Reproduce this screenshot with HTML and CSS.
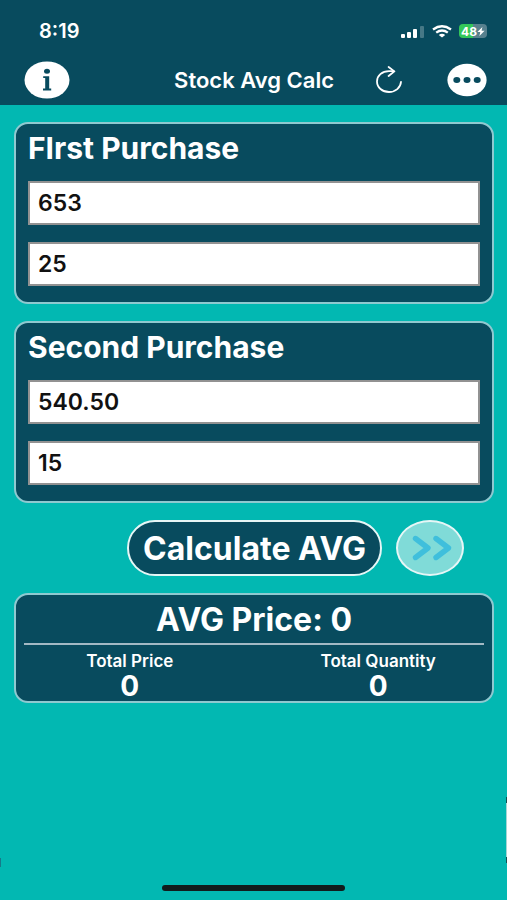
FILE: index.html
```
<!DOCTYPE html>
<html lang="en">
<head>
  <meta charset="UTF-8" />
  <meta name="viewport" content="width=device-width, initial-scale=1" />
  <title>Stock Avg Calc</title>
  <link rel="stylesheet" href="styles.css">
</head>
<body>
  <header class="header">
    <div class="status-bar">
      <span class="time">8:19</span>
      <div class="status-icons">
        <svg class="signal" width="24" height="13" viewBox="0 0 24 13" fill="#fff">
          <rect x="0" y="9" width="4" height="4" rx="1" />
          <rect x="6" y="7" width="4" height="6" rx="1" />
          <rect x="12" y="4" width="4" height="9" rx="1" />
          <rect x="19" y="1" width="4" height="12" rx="1" opacity="0.25" />
        </svg>
        <svg class="wifi" width="20" height="13" viewBox="0 0 20 13" fill="none" stroke="#fff" stroke-width="2.4">
          <path d="M1 4.4Q10 -1.8 19 4.4" />
          <path d="M4.2 7.6Q10 3.4 15.8 7.6" />
          <path d="M10 12.4L6.8 9.9Q10 7.7 13.2 9.9Z" fill="#fff" stroke="none" />
        </svg>
        <div class="battery">
          <span>48</span>
          <svg width="8" height="9" viewBox="0 0 8 9" fill="#fff"><path d="M5.4 0L0.4 5H3.3L2.4 9L7.6 3.8H4.6Z" /></svg>
        </div>
      </div>
    </div>
    <nav class="nav-bar">
      <button class="icon-button" aria-label="Info">
        <svg width="46" height="38" viewBox="0 0 46 38">
          <ellipse cx="23" cy="19" rx="22.5" ry="18.6" fill="#fff" />
          <ellipse cx="23" cy="10.2" rx="3" ry="2.5" fill="#084b5e" />
          <path d="M19.2 15.2H25.2V27.6H27.2V29.4H19V27.6H21.2V17H19.2Z" fill="#084b5e" />
        </svg>
      </button>
      <h1 class="title">Stock Avg Calc</h1>
      <button class="icon-button refresh" aria-label="Refresh">
        <svg width="28" height="28" viewBox="0 0 28 28" fill="none" stroke="#fff" stroke-width="1.8" stroke-linecap="round" stroke-linejoin="round">
          <path d="M26 15.8C25.7 21.6 20.5 26 14 26C7.3 26 2 21.4 2 15.5C2 9.7 7 5.2 14 5.2H18.6" />
          <path d="M13.6 1L19.4 5.4L13.6 10" />
        </svg>
      </button>
      <button class="icon-button" aria-label="More">
        <svg width="40" height="34" viewBox="0 0 40 34">
          <ellipse cx="20" cy="17" rx="19.6" ry="16.3" fill="#fff" />
          <g fill="#084b5e">
            <ellipse cx="9.8" cy="17" rx="3.5" ry="2.9" />
            <ellipse cx="20" cy="17" rx="3.5" ry="2.9" />
            <ellipse cx="30.2" cy="17" rx="3.5" ry="2.9" />
          </g>
        </svg>
      </button>
    </nav>
  </header>

  <main class="content">
    <section class="panel">
      <h2>FIrst Purchase</h2>
      <input type="text" id="price1" inputmode="decimal" aria-label="First purchase price" value="653">
      <input type="text" id="qty1" inputmode="decimal" aria-label="First purchase quantity" value="25">
    </section>

    <section class="panel">
      <h2>Second Purchase</h2>
      <input type="text" id="price2" inputmode="decimal" aria-label="Second purchase price" value="540.50">
      <input type="text" id="qty2" inputmode="decimal" aria-label="Second purchase quantity" value="15">
    </section>

    <div class="actions">
      <button class="calculate">Calculate AVG</button>
      <button class="next" aria-label="Next">
        <svg width="40" height="26" viewBox="0 0 40 26" fill="none" stroke="#3fbfdc" stroke-width="5.4" stroke-linecap="round" stroke-linejoin="round">
          <path d="M3.5 3.5L16 13L3.5 22.5" />
          <path d="M24 3.5L36.5 13L24 22.5" />
        </svg>
      </button>
    </div>

    <section class="panel results">
      <p class="average">AVG Price: <span id="avg">0</span></p>
      <div class="totals">
        <div class="total">
          <span class="label">Total Price</span>
          <span class="value" id="totalPrice">0</span>
        </div>
        <div class="total">
          <span class="label">Total Quantity</span>
          <span class="value" id="totalQty">0</span>
        </div>
      </div>
    </section>
  </main>

  <div class="edge-handle"></div>
  <div class="edge-mark"></div>
  <div class="home-indicator"></div>
</body>
</html>
```
FILE: styles.css
```
* {
  box-sizing: border-box;
}
body {
  font-family: Inter, "Liberation Sans", sans-serif;
  background: #02b8b2;
  color: #fff;
  display: flex;
  flex-direction: column;
  min-height: 100vh;
  margin: 0;
}
h1, h2, p {
  margin: 0;
}
button {
  font-family: inherit;
  color: inherit;
  cursor: pointer;
}
.header {
  background: #084b5e;
  padding: 20px 20px 6px 24px;
}
.status-bar {
  display: flex;
  justify-content: space-between;
  align-items: center;
  height: 22px;
  padding-left: 15px;
}
.time {
  font-size: 20px;
  font-weight: 600;
}
.status-icons {
  display: flex;
  align-items: center;
  gap: 7px;
}
.battery {
  display: flex;
  align-items: center;
  justify-content: center;
  width: 28px;
  height: 14px;
  border-radius: 4px;
  background: linear-gradient(to right, #34c759 50%, #57808e 50%);
  font-size: 12px;
  font-weight: 700;
}
.nav-bar {
  display: flex;
  align-items: center;
  height: 38px;
  margin-top: 19px;
}
.icon-button {
  display: flex;
  padding: 0;
  border: none;
  background: none;
}
.title {
  flex: 1;
  font-size: 22px;
  font-weight: 600;
  line-height: 26px;
  text-align: right;
}
.refresh {
  margin: 0 44px 0 41px;
}
.content {
  display: flex;
  flex-direction: column;
  gap: 17px;
  padding: 17px 13px 0 14px;
}
.panel {
  display: flex;
  flex-direction: column;
  gap: 17px;
  padding: 8px 12px 16px;
  border: 2px solid #8fc9d0;
  border-radius: 14px;
  background: #084b5e;
}
.panel h2 {
  font-size: 30px;
  font-weight: 700;
  line-height: 32px;
}
.panel input {
  width: 100%;
  height: 44px;
  padding: 0 8px;
  border: 2px solid #929292;
  border-radius: 0;
  background: #fff;
  color: #111;
  font-family: inherit;
  font-size: 23px;
  font-weight: 600;
}
.actions {
  display: flex;
  justify-content: flex-end;
  gap: 14px;
  padding-right: 30px;
}
.calculate {
  height: 56px;
  padding: 0 14px;
  border: 2px solid #e6f6f6;
  border-radius: 28px;
  background: #084b5e;
  font-size: 32px;
  font-weight: 700;
}
.next {
  display: flex;
  align-items: center;
  justify-content: center;
  width: 68px;
  height: 56px;
  padding: 0 0 0 4px;
  border: 2px solid #e6f6f6;
  border-radius: 50%;
  background: #80dbd8;
}
.results {
  gap: 0;
  padding: 8px 8px 0;
}
.average {
  padding-bottom: 6px;
  border-bottom: 2px solid #a3b9c4;
  font-size: 32px;
  font-weight: 700;
  line-height: 34px;
  text-align: center;
}
.totals {
  display: flex;
  justify-content: space-between;
  padding: 6px 0 0;
}
.total {
  display: flex;
  flex-direction: column;
  align-items: center;
  width: 46%;
}
.label {
  font-size: 17px;
  font-weight: 600;
  line-height: 21px;
}
.value {
  font-size: 28px;
  font-weight: 700;
  line-height: 29px;
}
/* sliver of the side drawer, tucked against the screen edge */
.edge-handle {
  position: absolute;
  right: 0;
  top: 797px;
  width: 1px;
  height: 66px;
  border: solid #114f50;
  border-width: 6px 0;
  background: #a5d5d4;
}
.edge-mark {
  position: absolute;
  left: 0;
  top: 858px;
  width: 1px;
  height: 9px;
  background: #17798a;
}
.home-indicator {
  width: 36%;
  height: 6px;
  margin: auto auto 9px;
  border-radius: 3px;
  background: #111c1c;
}
```
